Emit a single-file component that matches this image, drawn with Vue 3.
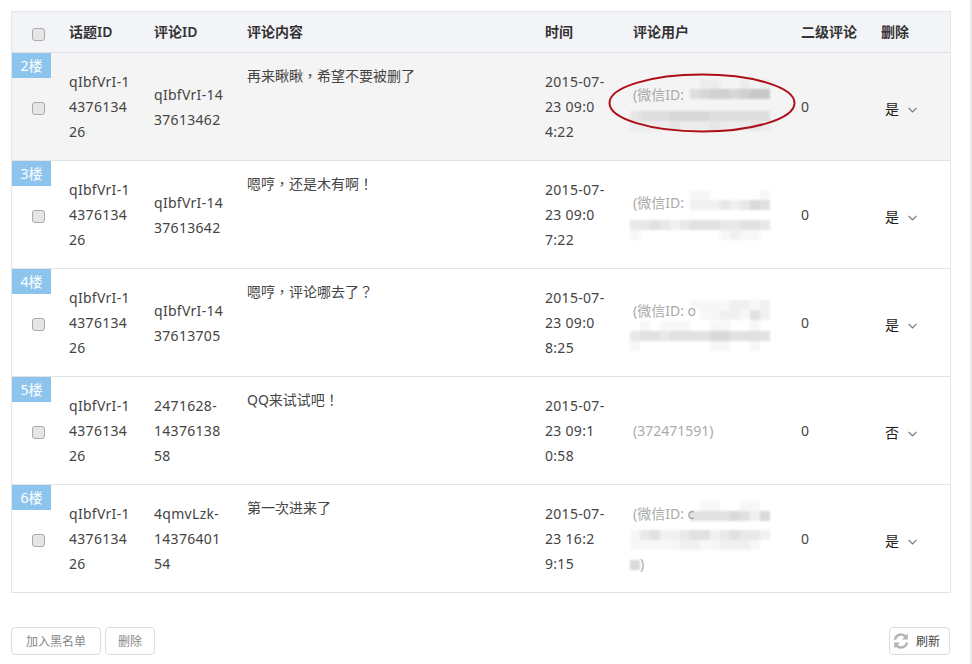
<script setup>
const columns = ['话题ID', '评论ID', '评论内容', '时间', '评论用户', '二级评论', '删除']

const rows = [
  {
    floor: '2楼', topic: ['qIbfVrI-1', '4376134', '26'], id: ['qIbfVrI-14', '37613462'],
    text: '再来瞅瞅，希望不要被删了', time: ['2015-07-', '23 09:0', '4:22'], del: '是', active: true,
    user: [
      { label: '(微信ID:', mt: -3, cells: ['01100101', '34554566'] },
      { mt: 4, cells: ['23334444333333', '11112111211121'] },
    ],
  },
  {
    floor: '3楼', topic: ['qIbfVrI-1', '4376134', '26'], id: ['qIbfVrI-14', '37613642'],
    text: '嗯哼，还是木有啊！', time: ['2015-07-', '23 09:0', '7:22'], del: '是',
    user: [
      { label: '(微信ID:', mt: 0, cells: ['11000001', '22232354'] },
      { mt: 5, cells: ['33432344433443', '10000000012110'] },
    ],
  },
  {
    floor: '4楼', topic: ['qIbfVrI-1', '4376134', '26'], id: ['qIbfVrI-14', '37613705'],
    text: '嗯哼，评论哪去了？', time: ['2015-07-', '23 09:0', '8:25'], del: '是',
    user: [
      { label: '(微信ID: o', mt: 2, cells: ['11112212', '01122142'] },
      { mt: -2, cells: ['01011100110010', '34434444554444', '10000000110010'] },
    ],
  },
  {
    floor: '5楼', topic: ['qIbfVrI-1', '4376134', '26'], id: ['2471628-', '14376138', '58'],
    text: 'QQ来试试吧！', time: ['2015-07-', '23 09:1', '0:58'], del: '否',
    plain: '(372471591)',
  },
  {
    floor: '6楼', topic: ['qIbfVrI-1', '4376134', '26'], id: ['4qmvLzk-', '14376401', '54'],
    text: '第一次进来了', time: ['2015-07-', '23 16:2', '9:15'], del: '是',
    user: [
      { label: '(微信ID: c', mt: 0, cells: ['01100110', '44445425'] },
      { mt: 4, cells: ['13422344234332', '11111221122210'] },
      { mt: 9, end: ')', cells: ['5'] },
    ],
  },
]

const shade = (ch) => ({ background: `rgba(40, 40, 40, ${Number(ch) * 0.035})` })
</script>

<template>
  <div class="page">
    <table class="grid">
      <colgroup>
        <col class="c-check" />
        <col class="c-topic" />
        <col class="c-id" />
        <col class="c-text" />
        <col class="c-time" />
        <col class="c-user" />
        <col class="c-sub" />
        <col class="c-del" />
      </colgroup>
      <thead>
        <tr>
          <th class="check-cell"><span class="check"></span></th>
          <th v-for="c in columns" :key="c">{{ c }}</th>
        </tr>
      </thead>
      <tbody>
        <tr v-for="row in rows" :key="row.floor" :class="{ active: row.active }">
          <td class="check-cell">
            <span class="badge">{{ row.floor }}</span>
            <span class="check low"></span>
          </td>
          <td class="num"><div v-for="l in row.topic" :key="l" class="line">{{ l }}</div></td>
          <td class="num"><div v-for="l in row.id" :key="l" class="line">{{ l }}</div></td>
          <td class="top"><div class="line">{{ row.text }}</div></td>
          <td class="num"><div v-for="l in row.time" :key="l" class="line">{{ l }}</div></td>
          <td class="user">
            <div v-if="row.plain" class="line">{{ row.plain }}</div>
            <div v-for="(u, i) in row.user" v-else :key="i" class="line masked">
              <span v-if="u.label" class="label">{{ u.label }}</span>
              <span class="mosaic" :class="{ full: !u.label }" :style="{ marginTop: u.mt + 'px' }">
                <span v-for="(r, j) in u.cells" :key="j" class="mrow">
                  <i v-for="(ch, k) in r" :key="k" :style="shade(ch)"></i>
                </span>
              </span>
              <span v-if="u.end">{{ u.end }}</span>
            </div>
          </td>
          <td>0</td>
          <td class="del">
            <span class="sel">
              {{ row.del }}
              <svg width="9" height="6" viewBox="0 0 9 6"><path d="M0.5 0.8 L4.5 4.8 L8.5 0.8" fill="none" stroke="#777" stroke-width="1.2" /></svg>
            </span>
          </td>
        </tr>
      </tbody>
    </table>

    <svg class="ring" width="190" height="62" viewBox="0 0 190 62">
      <ellipse cx="95" cy="31" rx="92.5" ry="28.5" fill="none" stroke="#ad0d16" stroke-width="2" />
    </svg>

    <div class="footer">
      <div class="left">
        <button class="btn wide">加入黑名单</button>
        <button class="btn narrow">删除</button>
      </div>
      <button class="btn refresh">
        <svg width="16" height="16" viewBox="0 0 16 16">
          <path d="M2 6.6 A6.2 6.2 0 0 1 12.7 3.6" fill="none" stroke="#b4b4b4" stroke-width="2.4" />
          <path d="M14.8 0.6 V6.4 H9 Z" fill="#b4b4b4" />
          <path d="M14 9.4 A6.2 6.2 0 0 1 3.3 12.4" fill="none" stroke="#b4b4b4" stroke-width="2.4" />
          <path d="M1.2 15.4 V9.6 H7 Z" fill="#b4b4b4" />
        </svg>
        刷新
      </button>
    </div>
  </div>
</template>

<style scoped>
.page {
  position: relative;
  box-sizing: border-box;
  width: 972px;
  height: 664px;
  padding: 11px 0 0 11px;
  border-right: 2px solid #e8e8e8;
  background: #fff;
  overflow: hidden;
  color: #444;
  font: 14px/25px "Noto Sans", "Noto Sans CJK SC", sans-serif;
}
.grid {
  width: 940px;
  table-layout: fixed;
  border-collapse: separate;
  border-spacing: 0;
  border: 1px solid #e4e6ea;
  border-bottom-color: #e3e3e3;
}
.c-check { width: 41px; }
.c-topic { width: 85px; }
.c-id { width: 93px; }
.c-text { width: 298px; }
.c-time { width: 88px; }
.c-user { width: 168px; }
.c-sub { width: 80px; }
.c-del { width: 85px; }
th {
  height: 38px;
  padding: 0 0 2px 16px;
  background: #f3f4f8;
  border-bottom: 1px solid #dfe0e2;
  color: #333;
  font-size: 14px;
  font-weight: 600;
  text-align: left;
}
td {
  position: relative;
  height: 107px;
  padding: 0 0 0 16px;
  border-bottom: 1px solid #e3e3e3;
  vertical-align: middle;
}
tbody tr:last-child td { border-bottom: 0; }
tr.active td { background: #f4f4f4; }
th.check-cell, td.check-cell { padding: 0 0 0 10px; text-align: center; }
th.check-cell { height: 40px; }
td.top {
  vertical-align: top;
  padding-top: 10px;
  height: 97px;
  font-family: "Noto Sans", "Noto Sans CJK TC", sans-serif;
}
td.num { letter-spacing: 0.3px; }
.line { white-space: nowrap; height: 25px; }
.check {
  display: inline-block;
  box-sizing: border-box;
  width: 13px;
  height: 13px;
  border: 1px solid #aaa;
  border-radius: 3px;
  background: #e6e6e6;
  vertical-align: middle;
  position: relative;
  top: 1px;
  left: 0.5px;
}
.check.low { top: 0; }
.badge {
  position: absolute;
  top: 0;
  left: 0;
  width: 39px;
  height: 25px;
  background: #8cc4ee;
  color: #fff;
  line-height: 25px;
  text-align: center;
}
.user { color: #aaa; }
.masked { display: flex; align-items: flex-start; }
.label { width: 57px; flex: none; }
.mosaic { display: block; flex: none; position: relative; filter: blur(1px); }
.mosaic.full { margin-left: -3px; }
.mrow { display: flex; height: 10px; }
.mrow i { display: block; width: 10px; height: 10px; }
.del { color: #222; }
.sel { display: inline-flex; align-items: center; gap: 9px; position: relative; left: 4px; top: 2px; }
.sel svg { position: relative; top: 1px; }
.ring { position: absolute; left: 607px; top: 72px; }
.footer {
  display: flex;
  justify-content: space-between;
  width: 939px;
  margin-top: 34px;
}
.left { display: flex; gap: 4px; }
.btn {
  box-sizing: border-box;
  height: 28px;
  padding: 0;
  border: 1px solid #ddd;
  border-radius: 4px;
  background: #fff;
  color: #888;
  font: 12px/26px "Noto Sans CJK SC", sans-serif;
}
.wide { width: 90px; }
.narrow { width: 50px; }
.refresh {
  width: 61px;
  padding-left: 3px;
  color: #444;
  display: flex;
  align-items: center;
  justify-content: flex-start;
  gap: 7px;
}
</style>
